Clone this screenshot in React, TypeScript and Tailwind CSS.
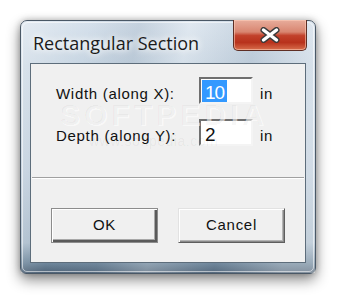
import React from "react";

const dlgFont = { fontFamily: '"Liberation Sans", Arial, sans-serif' };

function CloseX() {
  return (
    <svg width="22" height="16" viewBox="0 0 22 16">
      <path d="M4.5 3 L17.5 13 M17.5 3 L4.5 13" stroke="#3b3b3b" strokeWidth="6" strokeLinecap="round" />
      <path d="M4.5 3 L17.5 13 M17.5 3 L4.5 13" stroke="#ffffff" strokeWidth="3.4" strokeLinecap="round" />
    </svg>
  );
}

export default function App() {
  return (
    <div className="w-[350px] h-[307px] bg-white pt-[20px] pl-[20px] overflow-hidden">
      <div className="relative w-[296px] h-[254px] rounded-t-[7px] rounded-b-[6px] border border-[#4a5866] bg-[linear-gradient(180deg,#d6e1ec_0%,#c7d5e2_18%,#bccbda_60%,#a9bbcb_88%,#6f879c_96%,#4f6377_100%)] shadow-[0_6px_14px_rgba(0,0,0,0.45),0_0_6px_rgba(0,0,0,0.25)] flex flex-col px-[9px] pb-[10px]">
        {/* glass streaks */}
        <div className="absolute inset-0 rounded-t-[6px] bg-[linear-gradient(100deg,rgba(255,255,255,0.35)_0%,rgba(255,255,255,0)_20%,rgba(120,140,160,0.18)_35%,rgba(255,255,255,0.25)_50%,rgba(120,140,160,0.15)_70%,rgba(255,255,255,0.3)_90%)] pointer-events-none" />
        <div className="absolute inset-[1px] rounded-t-[6px] rounded-b-[5px] border border-[rgba(255,255,255,0.55)] pointer-events-none" />

        {/* title */}
        <div className="relative h-[42px] flex items-start pl-[3px] pt-[10px]">
          <span
            className="text-[18px] leading-[24px] text-[#1b1b1b] [text-shadow:0_0_6px_#ffffff,0_0_10px_#ffffff]"
            style={{ fontFamily: '"Open Sans", "Noto Sans", sans-serif' }}
          >
            Rectangular Section
          </span>
        </div>

        {/* close button */}
        <div className="absolute -top-[1px] left-[212px] w-[74px] h-[31px] rounded-b-[5px] border border-[#5e2e24] border-t-0 bg-[linear-gradient(180deg,#e8ad9c_0%,#d88570_40%,#c2412b_52%,#b8321c_75%,#d86e4c_100%)] shadow-[inset_0_0_0_1px_rgba(255,210,190,0.55)] flex items-center justify-center">
          <CloseX />
        </div>

        {/* client area */}
        <div className="relative flex-1 bg-[#f0f0f0] border border-[#5d6d7b] flex flex-col" style={dlgFont}>
          <div className="flex flex-col gap-[15px] pt-[13px] pl-[25px]">
            <div className="flex items-start h-[27px]">
              <span className="w-[143px] text-[15px] tracking-[0.7px] leading-[27px] mt-[3px] text-[#111]">Width (along X):</span>
              <div className="w-[54px] h-[27px] bg-white border-2 border-t-[#6f6f6f] border-l-[#6f6f6f] border-b-[#f4f4f4] border-r-[#f4f4f4] overflow-hidden">
                <span className="ml-[1px] mt-[1px] inline-block h-[22px] bg-[#3399ff] text-white text-[19px] leading-[22px] pt-[2px] px-[3px] tracking-[-1px] overflow-hidden align-top">10</span>
              </div>
              <span className="ml-[7px] text-[15px] tracking-[0.7px] leading-[27px] mt-[3px] text-[#111]">in</span>
            </div>
            <div className="flex items-start h-[27px]">
              <span className="w-[143px] text-[15px] tracking-[0.7px] leading-[27px] mt-[3px] text-[#111]">Depth (along Y):</span>
              <div className="w-[54px] h-[27px] bg-white border-2 border-t-[#6f6f6f] border-l-[#6f6f6f] border-b-[#f4f4f4] border-r-[#f4f4f4] overflow-hidden">
                <span className="ml-[1px] mt-[1px] inline-block h-[22px] text-[#111] text-[19px] leading-[22px] pt-[2px] px-[3px] overflow-hidden align-top">2</span>
              </div>
              <span className="ml-[7px] text-[15px] tracking-[0.7px] leading-[27px] mt-[3px] text-[#111]">in</span>
            </div>
          </div>

          <div className="mt-[31px] mx-[1px] h-[2px] border-t border-t-[#a0a0a0] border-b border-b-white" />

          <div className="flex gap-[20px] pl-[20px] mt-[29px]">
            <div className="w-[107px] h-[35px] bg-[#f0f0f0] border border-[#8c8c8c] shadow-[inset_1px_1px_0_#ffffff,inset_-2px_-2px_0_#5a5a5a,inset_-3px_-3px_0_#a8a8a8] flex items-center justify-center text-[15px] tracking-[0.7px] text-[#111]">
              OK
            </div>
            <div className="w-[107px] h-[35px] bg-[#f0f0f0] border border-t-[#e2e2e2] border-l-[#e2e2e2] border-b-[#5e5e5e] border-r-[#5e5e5e] shadow-[inset_1px_1px_0_#ffffff,inset_-1px_-1px_0_#8a8a8a,inset_-2px_-2px_0_#b4b4b4] flex items-center justify-center text-[15px] tracking-[0.7px] text-[#111]">
              Cancel
            </div>
          </div>

          {/* watermark */}
          <div className="absolute left-[29px] top-[28px] pointer-events-none text-[30px] font-bold tracking-[4px] text-[rgba(0,0,0,0.04)] [text-shadow:1px_1px_0_rgba(255,255,255,0.6)]">
            SOFTPEDIA
          </div>
          <div className="absolute left-[58px] top-[67px] pointer-events-none text-[14px] tracking-[0.5px] text-[rgba(0,0,0,0.05)]">
            www.softpedia.com
          </div>
        </div>
      </div>
    </div>
  );
}
